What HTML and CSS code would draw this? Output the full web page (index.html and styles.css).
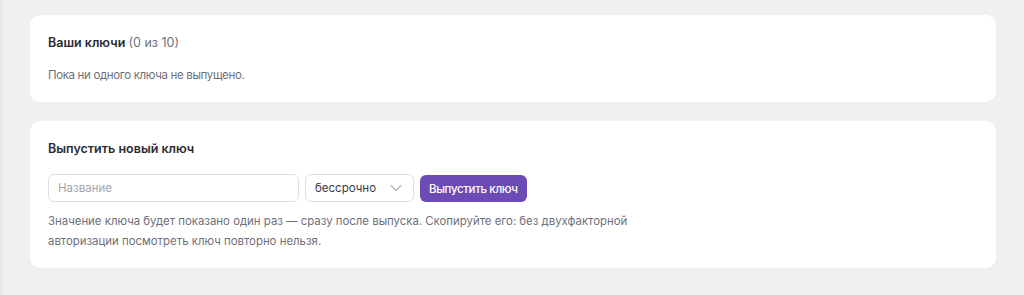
FILE: index.html
```html
<!DOCTYPE html>
<html>
   <head>
      <meta charset="UTF-8">
      <meta name="viewport" content="width=device-width, initial-scale=1.0"/>
      <title>Ключи</title>
      <link rel="stylesheet" href="styles.css">
   </head>
   <body>
      <div class="card">
         <h3 class="card-title">Ваши ключи <span class="count">(0 из 10)</span></h3>
         <p class="muted empty">Пока ни одного ключа не выпущено.</p>
      </div>

      <div class="card">
         <h3 class="card-title">Выпустить новый ключ</h3>
         <div class="key-form">
            <input class="field field-name" type="text" placeholder="Название">
            <div class="field field-select">
               <span>бессрочно</span>
               <svg width="12" height="8" viewBox="0 0 12 8"><path d="M1 1.5 L6 6.5 L11 1.5" fill="none" stroke="#b4b4bd" stroke-width="1.2" stroke-linecap="round" stroke-linejoin="round"/></svg>
            </div>
            <button class="button-primary">Выпустить ключ</button>
         </div>
         <p class="muted hint">Значение ключа будет показано один раз — сразу после выпуска. Скопируйте его: без двухфакторной<br>авторизации посмотреть ключ повторно нельзя.</p>
      </div>
   </body>
</html>
```

FILE: styles.css
```css
*
{
   box-sizing: border-box;
}

html, body
{
   height: 100%;
}

body
{
   margin: 0;
   padding: 15px 28px 0 30px;
   background: #f0f0f2;
   border-left: 3px solid #e8e8eb;
   font-family: Inter, "Noto Sans", sans-serif;
   color: #2b2b33;
}

.card
{
   background: #ffffff;
   border-radius: 10px;
   padding: 18px 18px 17px;
   margin-left: -3px;
   margin-bottom: 19px;
}

.card-title
{
   margin: 0 0 12px;
   font-size: 12.5px;
   line-height: 20px;
   font-weight: 600;
}

.count
{
   font-weight: 400;
   color: #6f6f7b;
}

.muted
{
   margin: 0;
   font-size: 11.4px;
   line-height: 20px;
   color: #6f6f7b;
}

.empty
{
   font-size: 11.5px;
   letter-spacing: -0.35px;
}

.key-form
{
   display: flex;
   gap: 6px;
   margin-top: 15px;
   height: 28px;
}

.field
{
   height: 28px;
   border: 1px solid #dedee4;
   border-radius: 6px;
   background: #ffffff;
   font-family: inherit;
   font-size: 11.5px;
   color: #3c3c46;
}

.field-name
{
   width: 251px;
   padding: 0 9px;
   outline: none;
}

.field-name::placeholder
{
   color: #a3a3ad;
}

.field-select
{
   width: 109px;
   display: flex;
   align-items: center;
   justify-content: space-between;
   padding: 0 11px 0 9px;
}

.button-primary
{
   height: 27px;
   margin-top: 1px;
   padding: 0 9px;
   border: none;
   border-radius: 6px;
   background: #6c4bb4;
   color: #ffffff;
   font-family: inherit;
   font-size: 11.5px;
   font-weight: 500;
   letter-spacing: -0.35px;
}

.hint
{
   margin-top: 9px;
}
```
